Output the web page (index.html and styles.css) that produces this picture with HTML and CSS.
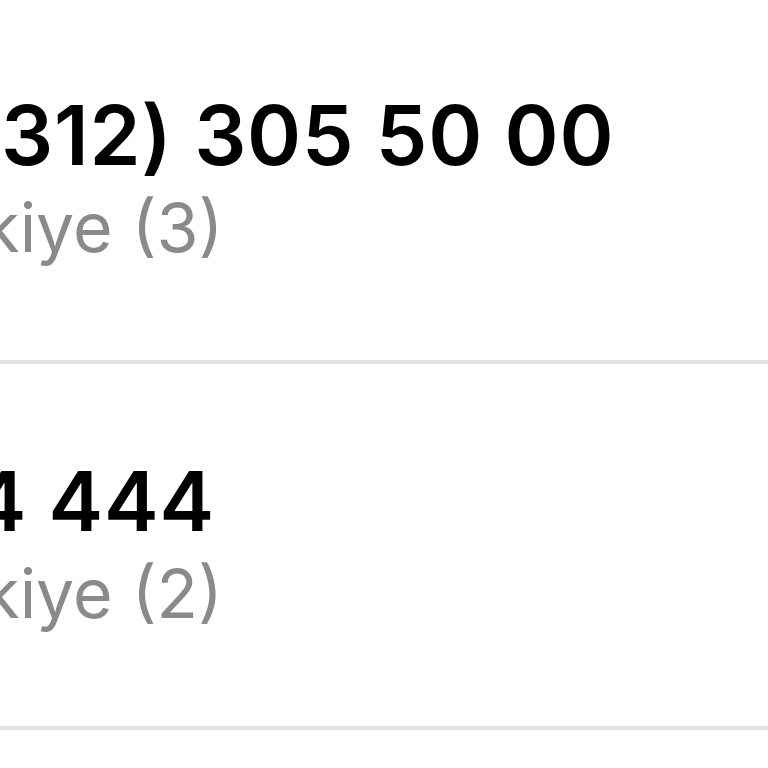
FILE: index.html
```html
<!DOCTYPE html>
<html lang="tr">
<head>
    <meta charset="UTF-8">
    <meta name="viewport" content="width=device-width, initial-scale=1.0">
    <title>Telefon</title>
    <link rel="stylesheet" href="styles.css">
</head>
<body>

    <ul class="phone-list">
        <li class="phone-row">
            <span class="phone-number">+90 (312) 305 50 00</span>
            <span class="phone-label">Türkiye (3)</span>
        </li>
        <li class="phone-row">
            <span class="phone-number">444 4 444</span>
            <span class="phone-label">Türkiye (2)</span>
        </li>
    </ul>

</body>
</html>
```

FILE: styles.css
```css
* {
    margin: 0;
    padding: 0;
    box-sizing: border-box;
    font-family: 'Inter', 'Noto Sans', sans-serif;
}

html, body {
    background-color: #ffffff;
    overflow: hidden;
}

.phone-list {
    list-style: none;
    margin-top: -2px;
}

.phone-row {
    display: flex;
    flex-direction: column;
    height: 366px;
    padding-top: 90px;
    border-bottom: 4px solid #e3e3e3;
    white-space: nowrap;
}

.phone-number {
    margin-left: -216px;
    font-size: 82px;
    line-height: 96px;
    font-weight: 600;
    letter-spacing: 0.8px;
    color: #000000;
}

.phone-label {
    margin-left: -125px;
    font-size: 68px;
    line-height: 86px;
    color: #8a8a8e;
}
```
